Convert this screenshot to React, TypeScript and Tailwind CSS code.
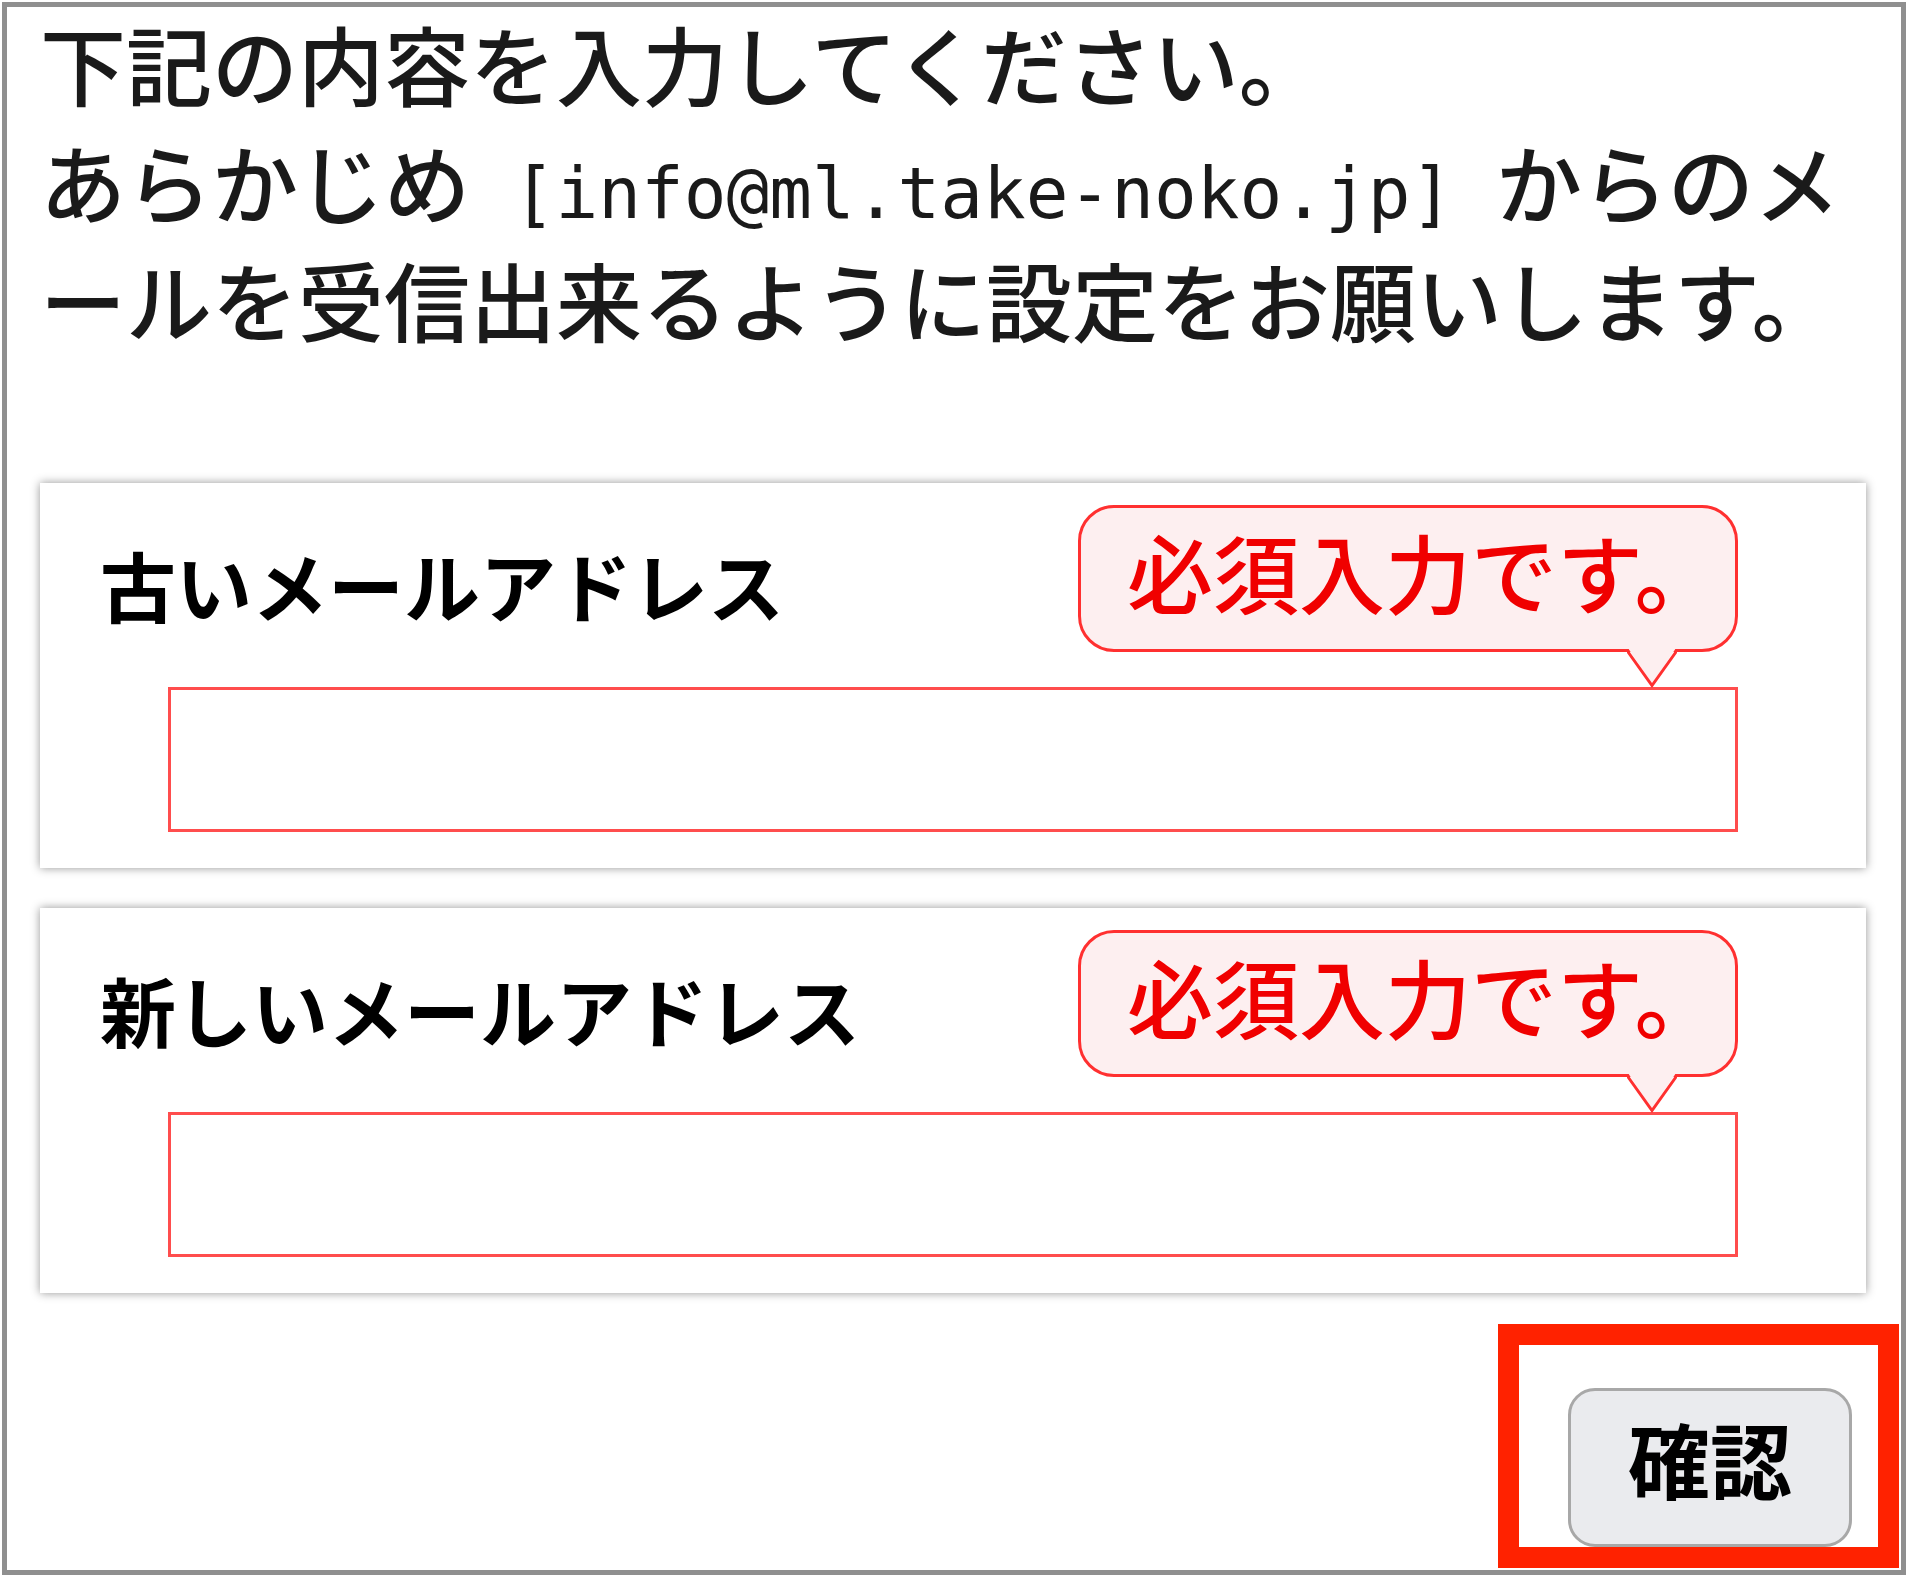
const jp = "[font-family:'Noto_Sans_CJK_JP',sans-serif]"

const Bubble = () => (
  <div className="relative flex h-[147px] w-[660px] shrink-0 items-center rounded-[36px] border-[3px] border-[#ff3030] bg-[#fdeff0] pb-[16px] pl-[46px]">
    <span className="text-[86px] leading-none font-medium text-[#f00000]">必須入力です。</span>
    <svg
      className="absolute left-[546px] top-[140px]"
      width="50"
      height="40"
      viewBox="0 0 50 40"
    >
      <polygon points="1,0 49,0 25,36" fill="#fdeff0" />
      <polyline points="0,2.5 25,37.5 50,2.5" fill="none" stroke="#ff3030" strokeWidth="3" />
    </svg>
  </div>
)

const Field = ({ label }: { label: string }) => (
  <div className="bg-white pt-[22px] pb-[36px] shadow-[0_0_9px_rgba(0,0,0,0.42)]">
    <div className="flex items-start justify-between pr-[128px] pl-[60px]">
      <span className="mt-[41px] text-[76px] leading-none font-bold text-black">{label}</span>
      <Bubble />
    </div>
    <div className="mt-[35px] px-[128px]">
      <input
        type="text"
        className="block h-[145px] w-full border-[3px] border-[#ff4d4d] bg-white outline-none"
      />
    </div>
  </div>
)

export default function App() {
  return (
    <div className={`h-[1578px] w-[1906px] bg-white pt-[2px] pb-[3px] pl-[2px] ${jp}`}>
      <div className="h-full border-[5px] border-[#8f8f8f] bg-white pr-[35px] pl-[33px]">
        <p className="-mt-[3px] text-[86px] leading-[118px] font-medium whitespace-nowrap text-[#1a1a1a]">
          下記の内容を入力してください。
          <br />
          あらかじめ
          <span className="text-[71px] leading-none font-normal [font-family:'DejaVu_Sans_Mono',monospace]">
            {' [info@ml.take-noko.jp] '}
          </span>
          からのメ
          <br />
          ールを受信出来るように設定をお願いします。
        </p>

        <div className="mt-[125px] flex flex-col gap-[40px]">
          <Field label="古いメールアドレス" />
          <Field label="新しいメールアドレス" />
        </div>

        <div className="mt-[95px] flex justify-end pr-[14px]">
          <div className="relative">
            <button
              type="button"
              className="flex h-[159px] w-[284px] items-center justify-center rounded-[27px] border-[3px] border-[#a8a8a8] bg-[#eaebee] pb-[19px] text-[82px] leading-none font-bold text-black"
            >
              確認
            </button>
            <div className="pointer-events-none absolute -top-[64px] -right-[47px] -bottom-[21px] -left-[70px] border-[21px] border-[#ff2200]" />
          </div>
        </div>
      </div>
    </div>
  )
}
